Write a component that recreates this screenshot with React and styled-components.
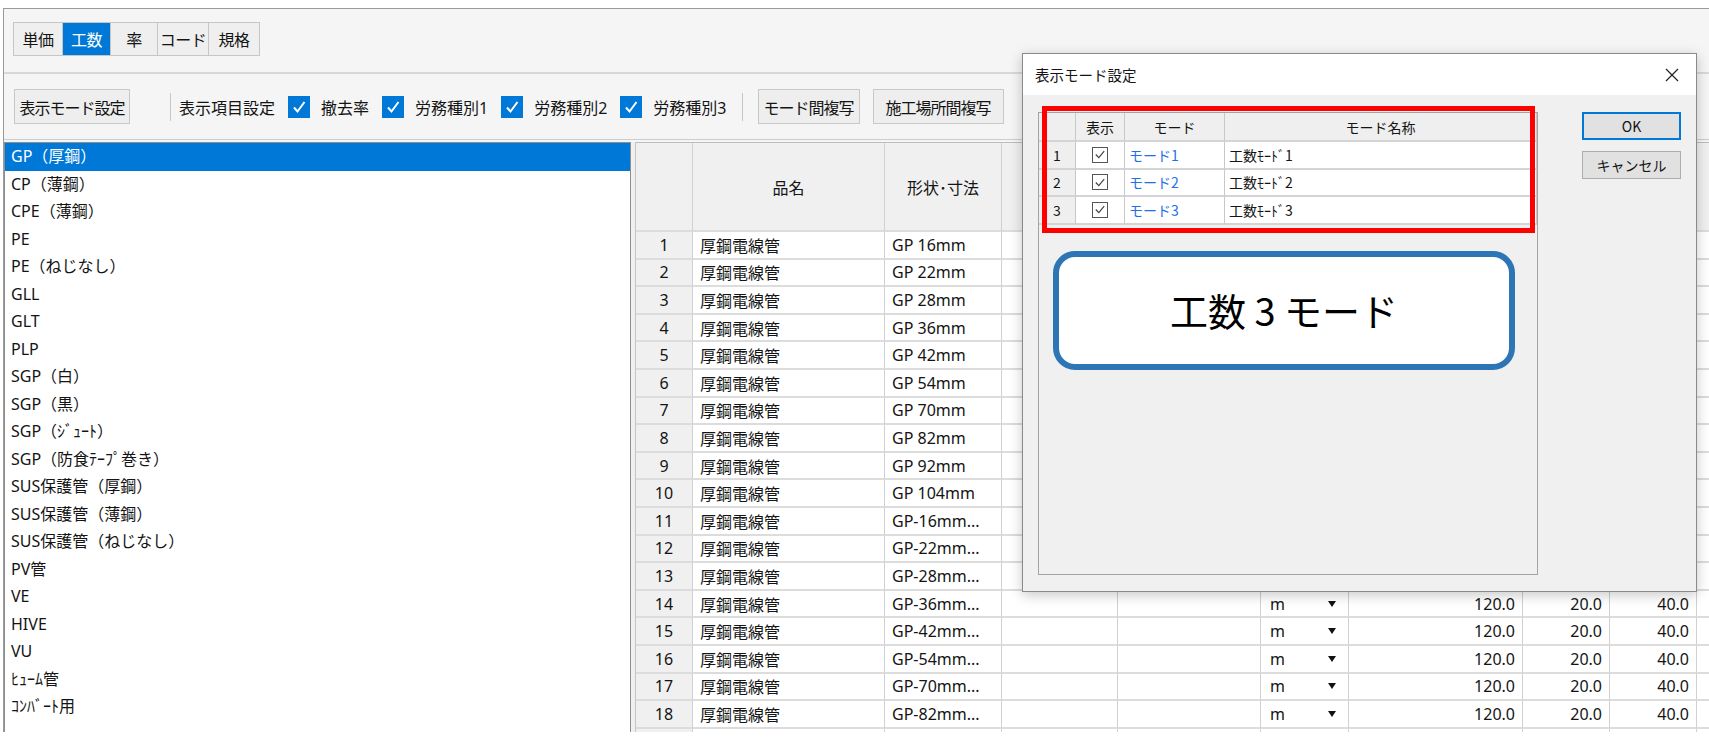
import React from "react";
import styled, { createGlobalStyle } from "styled-components";

const GlobalStyle = createGlobalStyle`
  html, body {
    margin: 0;
    padding: 0;
    background: #fff;
  }
  body {
    font-family: "Noto Sans", "Noto Sans CJK JP", sans-serif;
    color: #141414;
  }
  * {
    box-sizing: border-box;
  }
`;

const tabs = [
  { label: "単価", w: 49 },
  { label: "工数", w: 48, active: true },
  { label: "率", w: 47 },
  { label: "コード", w: 51 },
  { label: "規格", w: 50 },
];

const listItems = [
  "GP（厚鋼）",
  "CP（薄鋼）",
  "CPE（薄鋼）",
  "PE",
  "PE（ねじなし）",
  "GLL",
  "GLT",
  "PLP",
  "SGP（白）",
  "SGP（黒）",
  "SGP（ｼﾞｭｰﾄ）",
  "SGP（防食ﾃｰﾌﾟ巻き）",
  "SUS保護管（厚鋼）",
  "SUS保護管（薄鋼）",
  "SUS保護管（ねじなし）",
  "PV管",
  "VE",
  "HIVE",
  "VU",
  "ﾋｭｰﾑ管",
  "ｺﾝﾊﾞｰﾄ用",
];

const sizes = [
  "GP 16mm",
  "GP 22mm",
  "GP 28mm",
  "GP 36mm",
  "GP 42mm",
  "GP 54mm",
  "GP 70mm",
  "GP 82mm",
  "GP 92mm",
  "GP 104mm",
  "GP-16mm...",
  "GP-22mm...",
  "GP-28mm...",
  "GP-36mm...",
  "GP-42mm...",
  "GP-54mm...",
  "GP-70mm...",
  "GP-82mm...",
];

// rows whose right half is hidden behind the dialog
const HIDDEN_ROWS = 13;

const modes = [
  { no: 1, mode: "モード1", name: "工数ﾓｰﾄﾞ1" },
  { no: 2, mode: "モード2", name: "工数ﾓｰﾄﾞ2" },
  { no: 3, mode: "モード3", name: "工数ﾓｰﾄﾞ3" },
];

const COLS = "57px 192px 117px 116px 143px 88px 174px 87px 87px 1fr";

const CheckMark = ({ color = "#fff", size = 22 }) => (
  <svg width={size} height={size} viewBox="0 0 22 22">
    <path d="M6 11.5 L9.5 15.5 L16.5 6" fill="none" stroke={color} strokeWidth="2" />
  </svg>
);

const App = () => {
  return (
    <Page>
      <GlobalStyle />
      <Frame>
        <TabBar>
          <TabGroup>
            {tabs.map((t) => (
              <Tab key={t.label} $w={t.w} $active={t.active}>
                {t.label}
              </Tab>
            ))}
          </TabGroup>
        </TabBar>
        <Toolbar>
          <ToolButton $w={116}>表示モード設定</ToolButton>
          <VSep $ml={40} $mr={8} />
          <ToolLabel>表示項目設定</ToolLabel>
          {["撤去率", "労務種別1", "労務種別2", "労務種別3"].map((l) => (
            <CheckItem key={l}>
              <BlueBox>
                <CheckMark />
              </BlueBox>
              <ToolLabel>{l}</ToolLabel>
            </CheckItem>
          ))}
          <VSep $ml={15} $mr={15} />
          <ToolButton $w={102}>モード間複写</ToolButton>
          <ToolButton $w={131} $ml={13}>施工場所間複写</ToolButton>
        </Toolbar>
        <Content>
          <ListBox>
            {listItems.map((item, i) => (
              <ListItem key={item} $selected={i === 0}>
                {item}
              </ListItem>
            ))}
          </ListBox>
          <Splitter />
          <Table>
            <Row $head>
              <Cell $head />
              <Cell $head $align="center">品名</Cell>
              <Cell $head $align="center">形状･寸法</Cell>
              <Cell $head />
              <Cell $head />
              <Cell $head />
              <Cell $head />
              <Cell $head />
              <Cell $head />
              <Cell $head />
            </Row>
            {sizes.map((s, i) => {
              const shown = i >= HIDDEN_ROWS;
              return (
                <Row key={s}>
                  <Cell $num $align="center">{i + 1}</Cell>
                  <Cell>厚鋼電線管</Cell>
                  <Cell>{s}</Cell>
                  <Cell />
                  <Cell />
                  {shown ? (
                    <UnitCell>
                      <span>m</span>
                      <Caret />
                    </UnitCell>
                  ) : (
                    <Cell />
                  )}
                  <Cell $align="flex-end">{shown && "120.0"}</Cell>
                  <Cell $align="flex-end">{shown && "20.0"}</Cell>
                  <Cell $align="flex-end">{shown && "40.0"}</Cell>
                  <Cell />
                </Row>
              );
            })}
            <Row>
              {Array.from({ length: 10 }).map((_, i) => (
                <Cell key={i} $num={i === 0} />
              ))}
            </Row>
          </Table>
        </Content>
      </Frame>

      <Dialog>
        <TitleBar>
          <span>表示モード設定</span>
          <CloseBtn>
            <svg width="14" height="14" viewBox="0 0 14 14">
              <path d="M1 1 L13 13 M13 1 L1 13" stroke="#222" strokeWidth="1.2" />
            </svg>
          </CloseBtn>
        </TitleBar>
        <DialogBody>
          <Panel>
            <ModeGrid>
              <ModeRow $head>
                <ModeCell $head />
                <ModeCell $head $center>表示</ModeCell>
                <ModeCell $head $center>モード</ModeCell>
                <ModeCell $head $center>モード名称</ModeCell>
              </ModeRow>
              {modes.map((m) => (
                <ModeRow key={m.no}>
                  <ModeCell $head $center>{m.no}</ModeCell>
                  <ModeCell $center>
                    <SmallCheck>
                      <svg width="15" height="15" viewBox="0 0 15 15">
                        <path d="M3 7.5 L6.2 10.8 L12 3.8" fill="none" stroke="#444" strokeWidth="1.3" />
                      </svg>
                    </SmallCheck>
                  </ModeCell>
                  <ModeCell $link>{m.mode}</ModeCell>
                  <ModeCell>{m.name}</ModeCell>
                </ModeRow>
              ))}
            </ModeGrid>
            <Callout>工数 3 モード</Callout>
          </Panel>
          <ButtonCol>
            <DlgButton $focus>OK</DlgButton>
            <DlgButton>キャンセル</DlgButton>
          </ButtonCol>
        </DialogBody>
        <RedMark />
      </Dialog>
    </Page>
  );
};

const Page = styled.div`
  position: relative;
  width: 1709px;
  height: 741px;
  padding: 8px 0 0 3px;
  overflow: hidden;
`;

const Frame = styled.div`
  height: 724px;
  border-top: 1px solid #9a9a9a;
  border-left: 1px solid #9a9a9a;
  background: #f5f5f5;
  display: flex;
  flex-direction: column;
  overflow: hidden;
  font-size: 16px;
`;

const TabBar = styled.div`
  height: 65px;
  padding: 13px 0 0 9px;
  border-bottom: 2px solid #d8d8d8;
  flex-shrink: 0;
`;

const TabGroup = styled.div`
  display: inline-flex;
  height: 34px;
  border: 1px solid #c6c6c6;
  background: #efefef;
`;

const Tab = styled.div`
  width: ${(p) => p.$w}px;
  display: flex;
  align-items: center;
  justify-content: center;
  border-right: 1px solid #c6c6c6;
  background: ${(p) => (p.$active ? "#0078d7" : "#efefef")};
  color: ${(p) => (p.$active ? "#fff" : "#141414")};
  letter-spacing: -0.5px;
  &:last-child {
    border-right: none;
  }
`;

const Toolbar = styled.div`
  height: 66px;
  display: flex;
  align-items: center;
  padding-left: 10px;
  border-bottom: 1px solid #cdcdcd;
  flex-shrink: 0;
`;

const ToolButton = styled.div`
  width: ${(p) => p.$w}px;
  height: 35px;
  margin-left: ${(p) => p.$ml || 0}px;
  display: flex;
  align-items: center;
  justify-content: center;
  border: 1px solid #c8c8c8;
  background: #eeeeee;
  white-space: nowrap;
  letter-spacing: -1px;
`;

const VSep = styled.div`
  width: 1px;
  height: 28px;
  background: #c6c6c6;
  margin: 0 ${(p) => p.$mr}px 0 ${(p) => p.$ml}px;
`;

const ToolLabel = styled.span`
  white-space: nowrap;
`;

const CheckItem = styled.div`
  display: flex;
  align-items: center;
  gap: 11px;
  margin-left: 13px;
`;

const BlueBox = styled.span`
  width: 22px;
  height: 22px;
  background: #0078d7;
  display: flex;
  align-items: center;
  justify-content: center;
`;

const Content = styled.div`
  flex: 1;
  display: flex;
  padding-top: 2px;
  min-height: 0;
`;

const ListBox = styled.div`
  width: 627px;
  border: 1px solid #8e8e8e;
  border-bottom: none;
  background: #fff;
  overflow: hidden;
`;

const ListItem = styled.div`
  height: 27.5px;
  line-height: 27.5px;
  padding-left: 6px;
  white-space: nowrap;
  background: ${(p) => (p.$selected ? "#0078d7" : "transparent")};
  color: ${(p) => (p.$selected ? "#fff" : "#141414")};
`;

const Splitter = styled.div`
  width: 5px;
  background: #f0f0f0;
  border-right: 1px solid #c4c4c4;
`;

const Table = styled.div`
  flex: 1;
  border-top: 1px solid #bdbdbd;
  background: #fff;
  overflow: hidden;
`;

const Row = styled.div`
  display: grid;
  grid-template-columns: ${COLS};
  height: ${(p) => (p.$head ? "89px" : "27.6px")};
`;

const Cell = styled.div`
  display: flex;
  align-items: center;
  justify-content: ${(p) => p.$align || "flex-start"};
  padding: 0 7px;
  border-right: 1px solid #d0d0d0;
  border-bottom: 2px solid #dcdcdc;
  background: ${(p) => (p.$head || p.$num ? "#f0f0f0" : "#fff")};
  white-space: nowrap;
  overflow: hidden;
  font-size: 16px;
`;

const UnitCell = styled(Cell)`
  justify-content: space-between;
  padding: 0 12px 0 9px;
`;

const Caret = styled.span`
  width: 0;
  height: 0;
  border-left: 4px solid transparent;
  border-right: 4px solid transparent;
  border-top: 6px solid #111;
`;

const Dialog = styled.div`
  position: absolute;
  left: 1022px;
  top: 53px;
  width: 675px;
  height: 539px;
  border: 1px solid #8a8a8a;
  background: #f0f0f0;
  box-shadow: 0 3px 12px rgba(0, 0, 0, 0.22);
  display: flex;
  flex-direction: column;
  font-family: "Noto Sans CJK JP", sans-serif;
  font-size: 14px;
`;

const TitleBar = styled.div`
  height: 41px;
  background: #fff;
  display: flex;
  align-items: center;
  justify-content: space-between;
  padding: 0 17px 0 12px;
  font-size: 14.5px;
  color: #141414;
`;

const CloseBtn = styled.span`
  display: flex;
  align-items: center;
`;

const DialogBody = styled.div`
  flex: 1;
  display: flex;
  padding: 17px 15px 0 15px;
`;

const Panel = styled.div`
  width: 500px;
  height: 463px;
  border: 1px solid #a3a3a3;
  background: #f0f0f0;
`;

const ModeGrid = styled.div`
  display: flex;
  flex-direction: column;
`;

const ModeRow = styled.div`
  display: grid;
  grid-template-columns: 37px 49px 100px 1fr;
  height: ${(p) => (p.$head ? "29px" : "27.6px")};
`;

const ModeCell = styled.div`
  display: flex;
  align-items: center;
  justify-content: ${(p) => (p.$center ? "center" : "flex-start")};
  padding: 0 ${(p) => (p.$center ? 0 : 4)}px;
  border-right: 1px solid #c8c8c8;
  border-bottom: 2px solid #d4d4d4;
  background: ${(p) => (p.$head ? "#efefef" : "#fff")};
  color: ${(p) => (p.$link ? "#1f70e8" : "#141414")};
  white-space: nowrap;
`;

const SmallCheck = styled.span`
  width: 16px;
  height: 16px;
  border: 1px solid #555;
  background: #fff;
  display: flex;
  align-items: center;
  justify-content: center;
`;

const Callout = styled.div`
  width: 462px;
  height: 119px;
  margin: 26px 0 0 14px;
  border: 6px solid #2e75b6;
  border-radius: 22px;
  background: #fff;
  display: flex;
  align-items: center;
  justify-content: center;
  font-family: "Noto Sans CJK JP", sans-serif;
  font-size: 38px;
  line-height: 1.2;
  white-space: nowrap;
  color: #000;
`;

const ButtonCol = styled.div`
  margin-left: auto;
  display: flex;
  flex-direction: column;
  gap: 11px;
`;

const DlgButton = styled.div`
  width: 99px;
  height: 28px;
  display: flex;
  align-items: center;
  justify-content: center;
  background: #e1e1e1;
  border: ${(p) => (p.$focus ? "2px solid #0078d7" : "1px solid #adadad")};
  color: #141414;
`;

const RedMark = styled.div`
  position: absolute;
  left: 19px;
  top: 52px;
  width: 493px;
  height: 127px;
  border: 5px solid #ff0000;
  pointer-events: none;
`;

export default App;
